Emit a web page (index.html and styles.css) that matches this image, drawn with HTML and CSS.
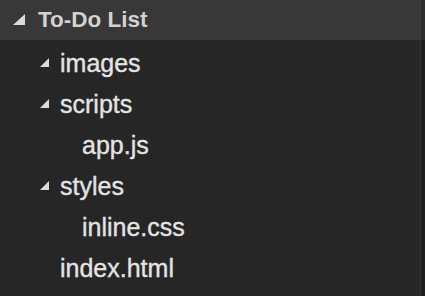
FILE: index.html
```html
<!DOCTYPE html>
<html lang="en">
<head>
  <meta charset="UTF-8">
  <meta name="viewport" content="width=device-width, initial-scale=1.0">
  <title>To-Do List | Explorer</title>
  <link rel="stylesheet" href="styles.css">
</head>
<body>
  <div class="explorer">
    <div class="folder-header">
      <span class="twistie twistie-root">
        <svg viewBox="0 0 12 11" class="arrow"><polygon points="12,0 12,11 0,11"/></svg>
      </span>
      <span class="label">To-Do List</span>
    </div>

    <ul class="tree">
      <li class="row depth-1">
        <span class="twistie"><svg viewBox="0 0 9 9" class="arrow"><polygon points="9,0 9,9 0,9"/></svg></span>
        <span class="label">images</span>
      </li>
      <li class="row depth-1">
        <span class="twistie"><svg viewBox="0 0 9 9" class="arrow"><polygon points="9,0 9,9 0,9"/></svg></span>
        <span class="label">scripts</span>
      </li>
      <li class="row depth-2">
        <span class="twistie"></span>
        <span class="label">app.js</span>
      </li>
      <li class="row depth-1">
        <span class="twistie"><svg viewBox="0 0 9 9" class="arrow"><polygon points="9,0 9,9 0,9"/></svg></span>
        <span class="label">styles</span>
      </li>
      <li class="row depth-2">
        <span class="twistie"></span>
        <span class="label">inline.css</span>
      </li>
      <li class="row depth-1">
        <span class="twistie"></span>
        <span class="label">index.html</span>
      </li>
    </ul>
  </div>
</body>
</html>
```

FILE: styles.css
```css
* {
  margin: 0;
  padding: 0;
  box-sizing: border-box;
  font-family: 'Liberation Sans', Arial, sans-serif;
}

html,
body {
  height: 100%;
}

body {
  background: #262626;
  color: #e4e4e4;
}

.explorer {
  height: 100%;
  background: #262626;
  box-shadow: inset -4px 0 0 #1f1f1f, inset -5px 0 0 #343434;
}

.folder-header {
  height: 40px;
  display: flex;
  align-items: center;
  padding-left: 13px;
  background: #383838;
  box-shadow: inset -4px 0 0 #2e2e2e, inset -5px 0 0 #404040;
  color: #d2d2d2;
  font-size: 22.5px;
  font-weight: 700;
}

.twistie {
  width: 22px;
  flex-shrink: 0;
  display: flex;
  align-items: center;
}

.twistie-root {
  width: 25px;
}

.arrow {
  width: 9px;
  height: 9px;
  fill: #dcdcdc;
  margin-left: 2px;
  margin-top: -3px;
}

.twistie-root .arrow {
  width: 12px;
  height: 11px;
  margin-left: 0;
  margin-top: -2px;
}

.tree {
  list-style: none;
  padding-top: 3px;
}

.row {
  height: 41px;
  display: flex;
  align-items: center;
  font-size: 25px;
  -webkit-text-stroke: 0.35px currentColor;
}
.depth-1 {
  padding-left: 38px;
}

.depth-2 {
  padding-left: 60px;
}
```
